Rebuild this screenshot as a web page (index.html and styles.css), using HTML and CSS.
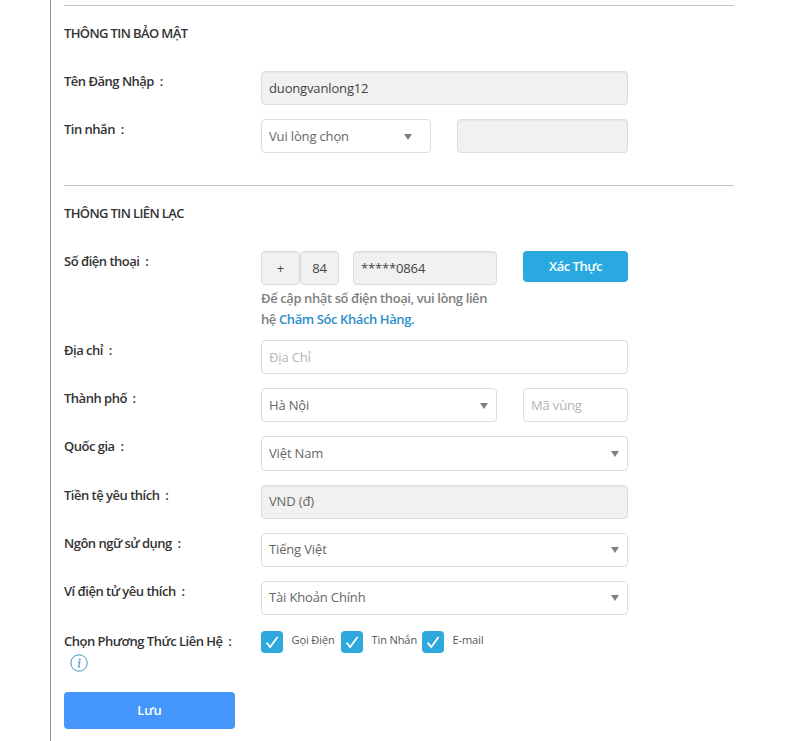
FILE: index.html
```html
<!DOCTYPE html>
<html lang="vi">
<head>
<meta charset="utf-8">
<title>Thông tin tài khoản</title>
<link rel="stylesheet" href="styles.css">
</head>
<body>
<main class="panel">
  <section class="section section-security">
    <h2 class="title">THÔNG TIN BẢO MẬT</h2>
    <div class="row">
      <div class="label">Tên Đăng Nhập&nbsp; :</div>
      <div class="field field-full disabled dark">duongvanlong12</div>
    </div>
    <div class="row">
      <div class="label">Tin nhắn&nbsp; :</div>
      <div class="field select select-msg">Vui lòng chọn<span class="caret"></span></div>
      <div class="field disabled field-msg"></div>
    </div>
  </section>
  <section class="section section-contact">
    <h2 class="title">THÔNG TIN LIÊN LẠC</h2>
    <div class="row row-phone">
      <div class="label">Số điện thoại&nbsp; :</div>
      <div class="phone-col">
        <div class="phone-line">
          <div class="field disabled dark center plus">+</div>
          <div class="field disabled dark center code">84</div>
          <div class="field disabled dark number">*****0864</div>
          <button class="verify" type="button">Xác Thực</button>
        </div>
        <p class="help">Để cập nhật số điện thoại, vui lòng liên<br>hệ <a class="link">Chăm Sóc Khách Hàng.</a></p>
      </div>
    </div>
    <div class="row">
      <div class="label">Địa chỉ&nbsp; :</div>
      <div class="field field-full placeholder">Địa Chỉ</div>
    </div>
    <div class="row">
      <div class="label">Thành phố&nbsp; :</div>
      <div class="field select select-city">Hà Nội<span class="caret"></span></div>
      <div class="field placeholder field-zip">Mã vùng</div>
    </div>
    <div class="row">
      <div class="label">Quốc gia&nbsp; :</div>
      <div class="field field-full field-tall select">Việt Nam<span class="caret"></span></div>
    </div>
    <div class="row">
      <div class="label">Tiền tệ yêu thích&nbsp; :</div>
      <div class="field field-full field-tight disabled">VND (đ)</div>
    </div>
    <div class="row">
      <div class="label">Ngôn ngữ sử dụng&nbsp; :</div>
      <div class="field field-full field-tight select">Tiếng Việt<span class="caret"></span></div>
    </div>
    <div class="row">
      <div class="label">Ví điện tử yêu thích&nbsp; :</div>
      <div class="field field-full field-tight select">Tài Khoản Chính<span class="caret"></span></div>
    </div>
    <div class="row row-contact">
      <div class="label label-contact">Chọn Phương Thức Liên Hệ&nbsp; :
        <svg class="info" viewBox="0 0 18 18" width="18" height="18" aria-hidden="true"><circle cx="9" cy="9" r="8.2" fill="none" stroke="#3f97c4" stroke-width="1"/><circle cx="9.7" cy="5.4" r="1" fill="#3f97c4"/><path d="M7.8 8h2l-1.2 4.6c-.1.5.4.6 1.3-.2" fill="none" stroke="#3f97c4" stroke-width="1.1"/></svg>
      </div>
      <div class="checks">
        <label class="check"><svg class="box" viewBox="0 0 22 22" width="22" height="22" aria-hidden="true"><rect width="22" height="22" rx="4" fill="#2fa8de"/><path d="M5.6 11.6l3.6 4.4 7.4-10" fill="none" stroke="#fff" stroke-width="1.8"/></svg><span class="check-text">Gọi Điện</span></label>
        <label class="check"><svg class="box" viewBox="0 0 22 22" width="22" height="22" aria-hidden="true"><rect width="22" height="22" rx="4" fill="#2fa8de"/><path d="M5.6 11.6l3.6 4.4 7.4-10" fill="none" stroke="#fff" stroke-width="1.8"/></svg><span class="check-text">Tin Nhắn</span></label>
        <label class="check"><svg class="box" viewBox="0 0 22 22" width="22" height="22" aria-hidden="true"><rect width="22" height="22" rx="4" fill="#2fa8de"/><path d="M5.6 11.6l3.6 4.4 7.4-10" fill="none" stroke="#fff" stroke-width="1.8"/></svg><span class="check-text">E-mail</span></label>
      </div>
    </div>
    <button class="save" type="button">Lưu</button>
  </section>
</main>
</body>
</html>
```
FILE: styles.css
```css
* { box-sizing: border-box; }
html, body { margin: 0; padding: 0; background: #fff; }
body {
  height: 741px;
  overflow: hidden;
  font-family: "Open Sans", "Noto Sans", sans-serif;
  color: #333;
}
.panel {
  margin-left: 50px;
  width: 684px;
  height: 741px;
  border-left: 1px solid #8c8c8c;
  padding: 5px 0 0 13px;
}
.section { border-top: 1px solid #c4c4c4; }
.section-security { height: 180px; padding-top: 18px; }
.section-contact { padding-top: 18px; }
.title {
  margin: 0 0 29px;
  font-size: 13px;
  line-height: 18px;
  font-weight: 600;
  letter-spacing: -0.62px;
  color: #333;
}
.row { display: flex; align-items: flex-start; margin-bottom: 14px; }
.label {
  width: 197px;
  flex: none;
  font-size: 13px;
  line-height: 20px;
  font-weight: 600;
  letter-spacing: -0.5px;
  color: #333;
}
.field {
  height: 34px;
  border: 1px solid #dcdcdc;
  border-radius: 4px;
  padding: 0 7px;
  font-size: 13px;
  line-height: 32px;
  letter-spacing: -0.15px;
  color: #666;
  background: #fff;
  position: relative;
}
.field-full { width: 367px; }
.field-tall { height: 35px; }
.field-tight { line-height: 30px; }
.disabled { background: #f1f1f1; box-shadow: inset 0 1px 1px rgba(0, 0, 0, 0.05); }
.dark { color: #444; }
.placeholder { color: #b4b4b4; }
.select-msg { width: 170px; }
.field-msg { width: 171px; margin-left: 26px; }
.select-city { width: 236px; }
.field-zip { width: 105px; margin-left: 26px; }
.caret {
  position: absolute;
  right: 8px;
  top: 14px;
  width: 0;
  height: 0;
  border-left: 4px solid transparent;
  border-right: 4px solid transparent;
  border-top: 6px solid #808080;
}
.select-msg .caret { right: 18px; }
.field-tight .caret { top: 13px; }
.row-phone { margin-bottom: 10px; }
.phone-col { width: 367px; }
.phone-line { display: flex; }
.center { text-align: center; padding: 0; }
.plus { width: 39px; }
.code { width: 39px; }
.number { width: 144px; margin-left: 14px; }
.verify {
  width: 105px;
  height: 31px;
  margin-left: 26px;
  border: 0;
  border-radius: 4px;
  background: #29a9e0;
  color: #fff;
  font: 600 13px/31px "Open Sans", sans-serif;
  letter-spacing: -0.5px;
  padding: 0;
}
.help {
  margin: 3px 0 0;
  font-size: 13px;
  line-height: 21px;
  font-weight: 600;
  letter-spacing: -0.4px;
  color: #808080;
}
.link { color: #2b8fc9; }
.row-contact { margin-top: 16px; margin-bottom: 15px; height: 46px; }
.label-contact { line-height: 20px; }
.info { display: block; margin: 3px 0 0 6px; }
.checks { display: grid; grid-template-columns: 80px 81px auto; }
.check { display: flex; align-items: flex-start; }
.box { flex: none; }
.check-text {
  font-size: 11px;
  line-height: 18px;
  letter-spacing: -0.1px;
  color: #555;
  margin-left: 8.5px;
}
.save {
  display: block;
  width: 171px;
  height: 37px;
  border: 0;
  border-radius: 4px;
  background: #4496fb;
  color: #fff;
  font: 600 13px/37px "Open Sans", sans-serif;
  padding: 0;
}
```
